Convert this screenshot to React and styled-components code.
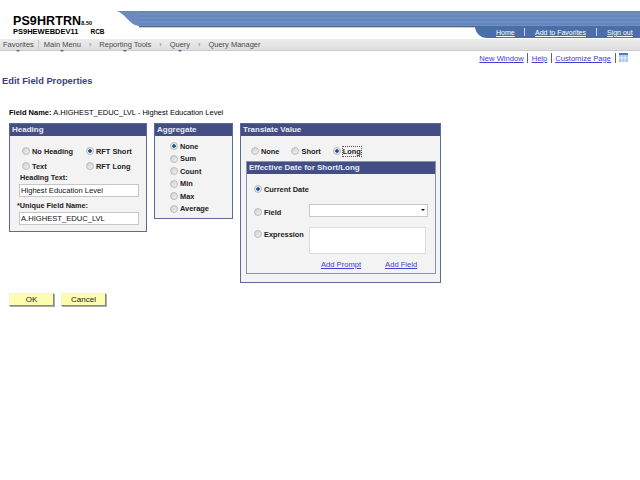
import React from 'react';
import styled, { createGlobalStyle } from 'styled-components';

const GlobalStyle = createGlobalStyle`
    html, body {
        margin: 0;
        padding: 0;
        background: #ffffff;
    }

    body {
        font-family: "Liberation Sans", Arial, sans-serif;
        color: #000000;
    }
`;

const Page = styled.div`
    width: 640px;
    height: 480px;
    overflow: hidden;
    background: #ffffff;
`;

// header
const Header = styled.header`
    display: flex;
    height: 39px;
`;

const Brand = styled.div`
    width: 117px;
    flex-shrink: 0;
    padding: 15px 0 0 13px;
    box-sizing: border-box;
`;

const Database = styled.div`
    font-size: 12.5px;
    line-height: 13px;
    font-weight: 700;
    letter-spacing: 0.1px;

    small {
        font-size: 5.5px;
        line-height: 0;
    }
`;

const Server = styled.div`
    display: flex;
    gap: 12px;
    font-size: 7.5px;
    line-height: 9px;
    font-weight: 700;
    margin-top: -1px;

    span + span {
        font-size: 6.5px;
    }
`;

const HeaderRight = styled.div`
    flex: 1;
    padding-top: 11px;
    display: flex;
    flex-direction: column;
`;

const BandRow = styled.div`
    display: flex;
    height: 15px;
`;

const Swoosh = styled.svg`
    width: 22px;
    height: 15px;
    flex-shrink: 0;
    display: block;
`;

const Band = styled.div`
    flex: 1;
    background: repeating-linear-gradient(180deg, #6486be 0 2px, #6f8fc4 2px 4px);
`;

const BandEdge = styled.div`
    height: 2px;
    margin-left: 22px;
    background: linear-gradient(180deg, #5b5f8c 0 1px, #cfcdc8 1px 2px);
`;

const TopLinks = styled.nav`
    display: flex;
    align-self: flex-end;
    align-items: center;
    width: 165px;
    height: 12px;
    margin-top: -2px;
    box-sizing: border-box;
    background: #4a6fa8;
    border-bottom-left-radius: 12px;
    padding-left: 21px;
`;

const TopLink = styled.a`
    font-size: 7px;
    color: #ffffff;
    text-decoration: underline;
    width: ${p => p.$width}px;
    flex-shrink: 0;
`;

const TopDivider = styled.span`
    width: 1px;
    height: 8px;
    background: #c9d4e6;
    margin-right: 10px;
    flex-shrink: 0;
`;

const NavBar = styled.nav`
    display: flex;
    align-items: center;
    height: 11px;
    background: linear-gradient(180deg, #ececec, #dedede);
    border-bottom: 1px solid #cccccc;
    padding-left: 3px;
    font-size: 7.5px;
    color: #4a4a4a;
`;

const NavItem = styled.span`
    position: relative;

    &::after {
        content: "";
        display: ${p => (p.$menu ? 'block' : 'none')};
        position: absolute;
        left: 50%;
        bottom: -3px;
        margin-left: -2px;
        border: 2px solid transparent;
        border-top: 2px solid #2f6db0;
        border-bottom: 0;
    }
`;

const NavSeparator = styled.span`
    width: 1px;
    height: 9px;
    background: #c8c8c8;
    margin: 0 4.5px;
`;

const NavArrow = styled.span`
    margin: 0 8px;
    color: #777777;
    font-size: 7px;
`;

// page links
const PageLinks = styled.div`
    display: flex;
    justify-content: flex-end;
    align-items: center;
    height: 12px;
    margin-top: 1px;
    padding-right: 12px;
`;

const PageLink = styled.a`
    font-size: 7.6px;
    color: #4040d4;
    text-decoration: underline;
`;

const PageDivider = styled.span`
    width: 1px;
    height: 10px;
    background: #6a5a80;
    margin: 0 3.5px;
`;

const GridIcon = styled.svg`
    width: 9px;
    height: 9px;
    display: block;
    margin-top: -2px;
`;

const Content = styled.main`
    padding: 12px 0 0 2px;
`;

const Title = styled.h1`
    margin: 0;
    font-size: 9.3px;
    line-height: 11px;
    font-weight: 700;
    color: #3b3f80;
`;

const FieldName = styled.p`
    margin: 21px 0 0 7px;
    font-size: 7.5px;
    line-height: 10px;
`;

const Panels = styled.div`
    display: flex;
    align-items: flex-start;
    gap: 7px;
    margin: 5px 0 0 7px;
`;

const Panel = styled.section`
    width: ${p => p.$width}px;
    height: ${p => p.$height}px;
    box-sizing: border-box;
    border: 1px solid ${p => (p.$inner ? '#8a96a8' : '#5a6a9a')};
    background: #f3f3f3;
`;

const PanelTitle = styled.h2`
    margin: 0;
    height: 12px;
    line-height: 12px;
    padding-left: 2px;
    background: #434f84;
    color: #e8ecf4;
    font-size: 8px;
    font-weight: 700;
`;

const RadioGrid = styled.div`
    display: grid;
    grid-template-columns: 64px auto;
    row-gap: 7px;
    padding: 11px 0 0 12px;
`;

const RadioColumn = styled.div`
    display: flex;
    flex-direction: column;
    gap: 4.5px;
    padding: 6px 0 0 15px;
`;

const RadioRow = styled.div`
    display: flex;
    gap: 12px;
    padding: 11px 0 0 10px;
`;

const RadioLabel = styled.label`
    display: flex;
    align-items: center;
    gap: 2px;
    height: 8px;
    font-size: 7.4px;
    font-weight: 700;
    color: #222222;
    white-space: nowrap;

    span {
        outline: ${p => (p.$focus ? '1px dotted #555555' : 'none')};
    }
`;

const RadioInput = styled.input`
    appearance: none;
    width: 6px;
    height: 6px;
    margin: 0;
    border-radius: 50%;
    border: 1px solid #bbbbbb;
    background: ${p => (p.checked
        ? 'radial-gradient(circle, #1f4f8f 0 35%, #dfe6ef 45%)'
        : 'linear-gradient(135deg, #cfcfcf, #f2f2f2)')};
    box-sizing: content-box;
    flex-shrink: 0;
`;

const FieldLabel = styled.div`
    font-size: 7.3px;
    line-height: 10px;
    font-weight: 700;
    color: #222222;
    margin: ${p => p.$margin};
`;

const TextBox = styled.input`
    display: block;
    width: 116px;
    height: 11px;
    margin: 1px 0 0 9px;
    padding: 0 1px;
    font-family: inherit;
    font-size: 7.6px;
    color: #111111;
    background: #ffffff;
    border: 1px solid #c6c6c6;
    box-sizing: content-box;
    outline: none;
`;

const InnerWrap = styled.div`
    padding: 6px 0 0 5px;
`;

const DateBody = styled.div`
    display: grid;
    grid-template-columns: 55px 119px;
    padding: 11px 0 0 7px;
`;

const CurrentDate = styled.div`
    grid-column: 1 / -1;
    margin-bottom: 11px;
`;

const DateLabel = styled.div`
    margin-top: ${p => p.$top}px;
`;

const SelectBox = styled.div`
    position: relative;
    height: 13px;
    box-sizing: border-box;
    background: #ffffff;
    border: 1px solid #c6c6c6;
    margin-bottom: 10px;

    &::after {
        content: "";
        position: absolute;
        right: 2px;
        top: 4px;
        border: 2.5px solid transparent;
        border-top: 2.5px solid #000000;
        border-bottom: 0;
    }
`;

const ExpressionBox = styled.div`
    width: 117px;
    height: 27px;
    background: #ffffff;
    border: 1px solid #dddddd;
    box-sizing: border-box;
`;

const DateLinks = styled.div`
    display: flex;
    gap: 24px;
    padding: 6px 0 0 74px;
`;

const InlineLink = styled.a`
    font-size: 7.6px;
    line-height: 10px;
    color: #4040d4;
    text-decoration: underline;
`;

const Buttons = styled.div`
    display: flex;
    gap: 7px;
    margin: 10px 0 0 7px;
`;

const Button = styled.button`
    width: 45px;
    height: 13px;
    padding: 0;
    font-family: inherit;
    font-size: 8px;
    color: #222222;
    background: #fdfdb0;
    border: 1px solid;
    border-color: #f4f4d0 #888888 #888888 #f4f4d0;
    box-shadow: 1px 1px 0 #aaaaaa;
`;

const Radio = ({ label, checked, focus }) => (
    <RadioLabel $focus={focus}>
        <RadioInput type="radio" checked={!!checked} readOnly />
        <span>{label}</span>
    </RadioLabel>
);

export default function App() {
    return (
        <Page>
            <GlobalStyle />
            <Header>
                <Brand>
                    <Database>PS9HRTRN<small>8.50</small></Database>
                    <Server><span>PS9HEWEBDEV11</span><span>RCB</span></Server>
                </Brand>
                <HeaderRight>
                    <BandRow>
                        <Swoosh viewBox="0 0 22 15">
                            <path d="M0 0H22V15C12 14 9 3 0 0Z" fill="#6a8ac0" />
                        </Swoosh>
                        <Band />
                    </BandRow>
                    <BandEdge />
                    <TopLinks>
                        <TopLink $width={28}>Home</TopLink>
                        <TopDivider />
                        <TopLink $width={61}>Add to Favorites</TopLink>
                        <TopDivider />
                        <TopLink $width={30}>Sign out</TopLink>
                    </TopLinks>
                </HeaderRight>
            </Header>
            <NavBar>
                <NavItem $menu>Favorites</NavItem>
                <NavSeparator />
                <NavItem $menu>Main Menu</NavItem>
                <NavArrow>›</NavArrow>
                <NavItem $menu>Reporting Tools</NavItem>
                <NavArrow>›</NavArrow>
                <NavItem $menu>Query</NavItem>
                <NavArrow>›</NavArrow>
                <NavItem>Query Manager</NavItem>
            </NavBar>
            <PageLinks>
                <PageLink>New Window</PageLink>
                <PageDivider />
                <PageLink>Help</PageLink>
                <PageDivider />
                <PageLink>Customize Page</PageLink>
                <PageDivider />
                <GridIcon viewBox="0 0 9 9">
                    <rect x="0" y="0" width="9" height="9" fill="#a9c6ea" />
                    <rect x="0" y="0" width="9" height="2" fill="#4a7fc0" />
                    <path d="M3 2V9M6 2V9M0 5H9" stroke="#ffffff" strokeWidth="0.7" />
                </GridIcon>
            </PageLinks>
            <Content>
                <Title>Edit Field Properties</Title>
                <FieldName><b>Field Name:</b> A.HIGHEST_EDUC_LVL - Highest Education Level</FieldName>
                <Panels>
                    <Panel $width={138} $height={109}>
                        <PanelTitle>Heading</PanelTitle>
                        <RadioGrid>
                            <Radio label="No Heading" />
                            <Radio label="RFT Short" checked />
                            <Radio label="Text" />
                            <Radio label="RFT Long" />
                        </RadioGrid>
                        <FieldLabel $margin="3px 0 0 10px">Heading Text:</FieldLabel>
                        <TextBox readOnly value="Highest Education Level" />
                        <FieldLabel $margin="4px 0 0 7px">*Unique Field Name:</FieldLabel>
                        <TextBox readOnly value="A.HIGHEST_EDUC_LVL" />
                    </Panel>
                    <Panel $width={79} $height={96}>
                        <PanelTitle>Aggregate</PanelTitle>
                        <RadioColumn>
                            <Radio label="None" checked />
                            <Radio label="Sum" />
                            <Radio label="Count" />
                            <Radio label="Min" />
                            <Radio label="Max" />
                            <Radio label="Average" />
                        </RadioColumn>
                    </Panel>
                    <Panel $width={201} $height={160}>
                        <PanelTitle>Translate Value</PanelTitle>
                        <RadioRow>
                            <Radio label="None" />
                            <Radio label="Short" />
                            <Radio label="Long" checked focus />
                        </RadioRow>
                        <InnerWrap>
                            <Panel $inner $width={190} $height={113}>
                                <PanelTitle>Effective Date for Short/Long</PanelTitle>
                                <DateBody>
                                    <CurrentDate><Radio label="Current Date" checked /></CurrentDate>
                                    <DateLabel $top={4}><Radio label="Field" /></DateLabel>
                                    <SelectBox />
                                    <DateLabel $top={3}><Radio label="Expression" /></DateLabel>
                                    <ExpressionBox />
                                </DateBody>
                                <DateLinks>
                                    <InlineLink>Add Prompt</InlineLink>
                                    <InlineLink>Add Field</InlineLink>
                                </DateLinks>
                            </Panel>
                        </InnerWrap>
                    </Panel>
                </Panels>
                <Buttons>
                    <Button>OK</Button>
                    <Button>Cancel</Button>
                </Buttons>
            </Content>
        </Page>
    );
}
